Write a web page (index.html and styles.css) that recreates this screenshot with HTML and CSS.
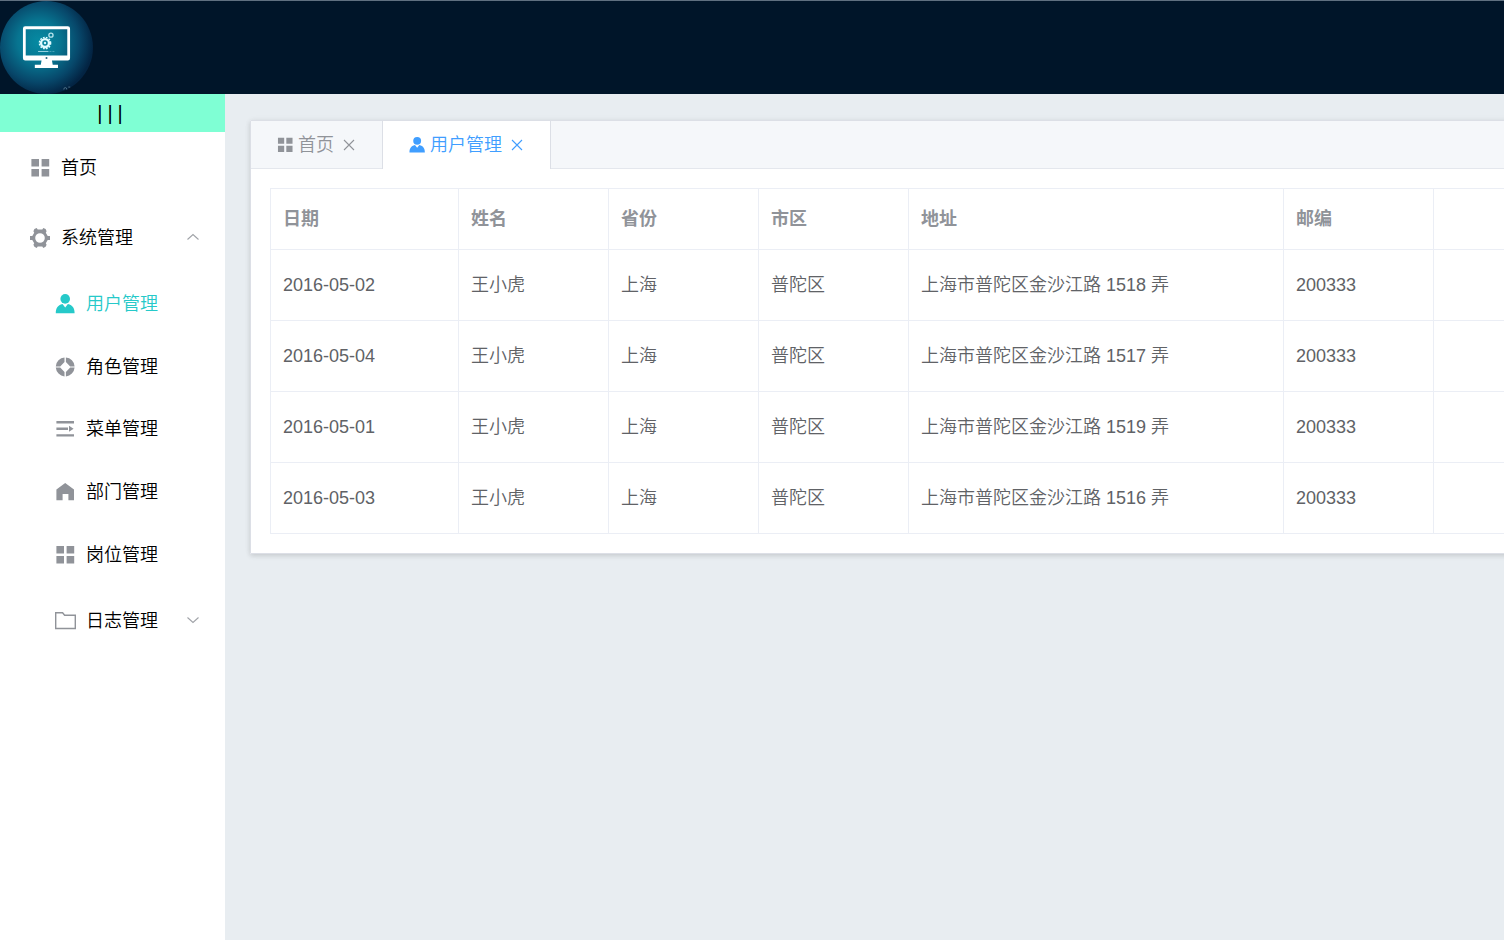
FILE: index.html
```html
<!DOCTYPE html>
<html lang="zh-CN">
<head>
<meta charset="utf-8">
<title>用户管理</title>
<meta name="viewport" content="width=device-width, initial-scale=1">
<link rel="stylesheet" href="styles.css">
</head>
<body>
<svg class="sprite" aria-hidden="true">
  <symbol id="i-grid" viewBox="0 0 22 22"><path d="M2.400 2h7.600v7.500H2.400zM12.600 2h7.600v7.500h-7.600zM2.400 12h7.600v7.500H2.400zM12.600 12h7.600v7.500h-7.600z"/></symbol>
  <symbol id="i-gear" viewBox="0 0 22 22"><path fill-rule="evenodd" d="M5.400 1.900l2.300-.9 1 1.400h4.600l1-1.400 2.300.9 1 2.300-.8 1.500 1.900 3.200H21v4.200h-2.300l-1.900 3.200.8 1.500-1 2-2.300 1.100-1-1.500H8.700l-1 1.500-2.300-1.100-1-2 .8-1.500-1.900-3.200H1V8.900h2.300l1.900-3.200-.8-1.500zM11 6.200a4.800 4.800 0 1 0 0 9.600 4.800 4.800 0 0 0 0-9.600z"/></symbol>
  <symbol id="i-user" viewBox="0 0 22 22"><circle cx="11.200" cy="5.900" r="4.800"/><path d="M1.800 20.300c0-4.800 1.700-8 6.700-9.200l2.700 3.400 2.700-3.400c5 1.200 6.700 4.400 6.700 9.200z"/></symbol>
  <symbol id="i-help" viewBox="0 0 22 22"><path d="M10.500 1.500V6L6.200 10.400H1.800a9.500 9.500 0 0 1 8.700-8.900zM11.900 1.500V6l4.300 4.400h4.400a9.500 9.500 0 0 0-8.700-8.900zM10.500 20.400v-4.500l-4.300-4.300H1.800a9.500 9.500 0 0 0 8.700 8.800zM11.900 20.400v-4.500l4.300-4.300h4.400a9.500 9.500 0 0 1-8.700 8.800z"/></symbol>
  <symbol id="i-fold" viewBox="0 0 22 22"><path d="M2.400 3H20v2.400H2.400zM2.400 9.600H14V12H2.400zM15 7.800l4.600 3-4.600 3zM2.400 16.200H20v2.400H2.400z"/></symbol>
  <symbol id="i-home" viewBox="0 0 22 22"><path d="M11.200 2l8.800 6.500v10.800h-5.600v-6.200H8.600v6.200H2.400V8.500z"/></symbol>
  <symbol id="i-folder" viewBox="0 0 22 22"><path fill="none" stroke="currentColor" stroke-width="1.400" d="M1.700 2.700h6.900l2 2.500h10.700v13.300H1.700z"/></symbol>
  <symbol id="i-up" viewBox="0 0 14 14"><path fill="none" stroke="currentColor" stroke-width="1.100" d="M1.500 8.500l5.500-5 5.500 5"/></symbol>
  <symbol id="i-down" viewBox="0 0 14 14"><path fill="none" stroke="currentColor" stroke-width="1.100" d="M1.500 3.500l5.500 5 5.500-5"/></symbol>
  <symbol id="i-close" viewBox="0 0 14 14"><path fill="none" stroke="currentColor" stroke-width="1.100" d="M2 2l10 10M12 2L2 12"/></symbol>
</svg>

<header class="topbar">
  <svg class="logo" viewBox="0 0 94 94" role="img" aria-label="Logo">
    <defs>
      <radialGradient id="glow" cx="42%" cy="44%" r="58%">
        <stop offset="0" stop-color="#068ba3"/>
        <stop offset=".4" stop-color="#077490"/>
        <stop offset=".75" stop-color="#07476a"/>
        <stop offset="1" stop-color="#032443"/>
      </radialGradient>
    </defs>
    <circle cx="47" cy="47" r="47" fill="url(#glow)"/>
    <path fill="#fff" fill-rule="evenodd" d="M25.500 25.500h43q2.300 0 2.300 2.300v30q0 2.300-2.300 2.300H52.500l.8 4.400h5.300v3.200H35.200v-3.200h6l.8-4.400H25.500q-2.300 0-2.300-2.300v-30q0-2.300 2.300-2.300zM26 28.500V55h42V28.500z"/>
    <circle cx="47" cy="57.500" r="1" fill="#24647b"/>
    <circle cx="45.500" cy="42.500" r="5.700" fill="none" stroke="#e0fbff" stroke-width="1.400" stroke-dasharray="1.800 1.200"/>
    <circle cx="45.500" cy="42.500" r="4" fill="none" stroke="#e0fbff" stroke-width="2.400"/>
    <circle cx="45.500" cy="42.500" r="1.200" fill="#d5f4fa"/>
    <circle cx="51.500" cy="34.500" r="2.100" fill="none" stroke="#b8e4ed" stroke-width="1.300"/>
    <path d="M38.500 51H49" stroke="#9bd6e3"/>
    <path d="M50 51h6" stroke="#4ba4b9" stroke-dasharray="2 1"/>
    <path d="M64.500 89.500q0-2 1.500-2t1.500 2M69 87h2" fill="none" stroke="#5d8095" stroke-width=".8"/>
  </svg>
</header>

<div class="shell">
  <aside class="sidebar">
    <button class="collapse" type="button" aria-label="折叠菜单">|||</button>
    <nav>
      <ul class="menu root">
        <li><a class="item" href="#"><svg class="icon"><use href="#i-grid"/></svg>首页</a></li>
        <li>
          <button class="item" type="button" aria-expanded="true"><svg class="icon"><use href="#i-gear"/></svg>系统管理<svg class="arrow"><use href="#i-up"/></svg></button>
          <ul class="menu submenu">
            <li><a class="item active" href="#"><svg class="icon"><use href="#i-user"/></svg>用户管理</a></li>
            <li><a class="item" href="#"><svg class="icon"><use href="#i-help"/></svg>角色管理</a></li>
            <li><a class="item" href="#"><svg class="icon"><use href="#i-fold"/></svg>菜单管理</a></li>
            <li><a class="item" href="#"><svg class="icon"><use href="#i-home"/></svg>部门管理</a></li>
            <li><a class="item" href="#"><svg class="icon"><use href="#i-grid"/></svg>岗位管理</a></li>
          </ul>
          <button class="item nested" type="button" aria-expanded="false"><svg class="icon"><use href="#i-folder"/></svg>日志管理<svg class="arrow"><use href="#i-down"/></svg></button>
        </li>
      </ul>
    </nav>
  </aside>

  <main class="content">
    <section class="card">
      <div class="tabs">
        <div class="tab"><button class="tab-label" type="button"><svg class="tab-icon"><use href="#i-grid"/></svg>首页</button><button class="close" type="button" aria-label="关闭首页"><svg><use href="#i-close"/></svg></button></div>
        <div class="tab current"><button class="tab-label" type="button"><svg class="tab-icon"><use href="#i-user"/></svg>用户管理</button><button class="close" type="button" aria-label="关闭用户管理"><svg><use href="#i-close"/></svg></button></div>
      </div>
      <div class="panel">
        <table class="table">
          <colgroup><col class="c-date"><col class="c-std"><col class="c-std"><col class="c-std"><col class="c-wide"><col class="c-std"><col class="c-std"></colgroup>
          <thead><tr><th>日期</th><th>姓名</th><th>省份</th><th>市区</th><th>地址</th><th>邮编</th><th></th></tr></thead>
          <tbody>
            <tr><td>2016-05-02</td><td>王小虎</td><td>上海</td><td>普陀区</td><td>上海市普陀区金沙江路 1518 弄</td><td>200333</td><td></td></tr>
            <tr><td>2016-05-04</td><td>王小虎</td><td>上海</td><td>普陀区</td><td>上海市普陀区金沙江路 1517 弄</td><td>200333</td><td></td></tr>
            <tr><td>2016-05-01</td><td>王小虎</td><td>上海</td><td>普陀区</td><td>上海市普陀区金沙江路 1519 弄</td><td>200333</td><td></td></tr>
            <tr><td>2016-05-03</td><td>王小虎</td><td>上海</td><td>普陀区</td><td>上海市普陀区金沙江路 1516 弄</td><td>200333</td><td></td></tr>
          </tbody>
        </table>
      </div>
    </section>
  </main>
</div>
</body>
</html>
```

FILE: styles.css
```css
* { box-sizing: border-box; }

body {
  margin: 0;
  min-height: 100vh;
  display: flex;
  flex-direction: column;
  background: #e8edf1;
  color: #000;
  font: 350 18px/24px "Liberation Sans", "Noto Sans CJK SC", sans-serif;
}

button {
  border: 0;
  padding: 0;
  background: none;
  color: inherit;
  font: inherit;
  cursor: pointer;
}

a { color: inherit; text-decoration: none; }
svg { fill: currentColor; }
.sprite { display: none; }

.topbar {
  display: flex;
  background: #001529;
  border-top: 1px solid #5f7080;
}

.logo { width: 93px; height: 93px; }

.shell { display: flex; flex: 1; }

.sidebar { width: 225px; flex: none; background: #fff; }

.collapse {
  display: block;
  width: 100%;
  height: 38px;
  background: #7fffd4;
  font-size: 20px;
  letter-spacing: 5px;
}

.menu { list-style: none; margin: 0; padding: 0; }
.root { padding-top: 1px; }

.item {
  display: flex;
  align-items: center;
  width: 100%;
  height: 70px;
  padding: 0 25px;
}

.submenu {
  display: grid;
  grid-auto-rows: 1fr;
  min-height: 313px;
}

.submenu .item { height: 100%; }
.submenu .item, .nested { padding-left: 50px; }
.item.active { color: #26c9c9; }

.icon {
  width: 22px;
  height: 22px;
  margin: 0 10px 0 4px;
  color: #909399;
}

.active .icon { color: inherit; }

.arrow {
  width: 14px;
  height: 14px;
  margin-left: auto;
  color: #a0a3a8;
}

.content { flex: 1; min-width: 0; padding: 26px 25px; overflow: hidden; }

.card {
  width: max-content;
  min-width: 100%;
  background: #fff;
  border: 1px solid #dcdfe6;
  box-shadow: 0 2px 5px rgba(0, 0, 0, .12), 0 0 7px rgba(0, 0, 0, .04);
}

.tabs {
  display: flex;
  height: 48px;
  background: #f5f7fa;
  border-bottom: 1px solid #e4e7ed;
}

.tab {
  display: flex;
  align-items: center;
  gap: 8px;
  margin-bottom: -1px;
  padding: 0 26px 0 25px;
  border-right: 1px solid transparent;
  color: #909399;
}

.tab-label { display: flex; align-items: center; gap: 4px; }
.tab-icon { width: 18px; height: 18px; }
.close, .close svg { display: block; width: 14px; height: 14px; }

.current {
  background: #fff;
  color: #409eff;
  border-right-color: #dcdfe6;
  box-shadow: -1px 0 #dcdfe6;
}

.panel { padding: 19px; }

.table {
  table-layout: fixed;
  width: 100%;
  min-width: 1313px;
  border-collapse: collapse;
  color: #606266;
}

.c-date { width: 188px; }
.c-std { width: 150px; }
.c-wide { width: 375px; }
.c-std:last-child { width: auto; }

th, td {
  height: 71px;
  padding: 0 12px;
  border: 1px solid #ebeef5;
  text-align: left;
}

th { height: 61px; color: #909399; font-weight: 700; }
```
